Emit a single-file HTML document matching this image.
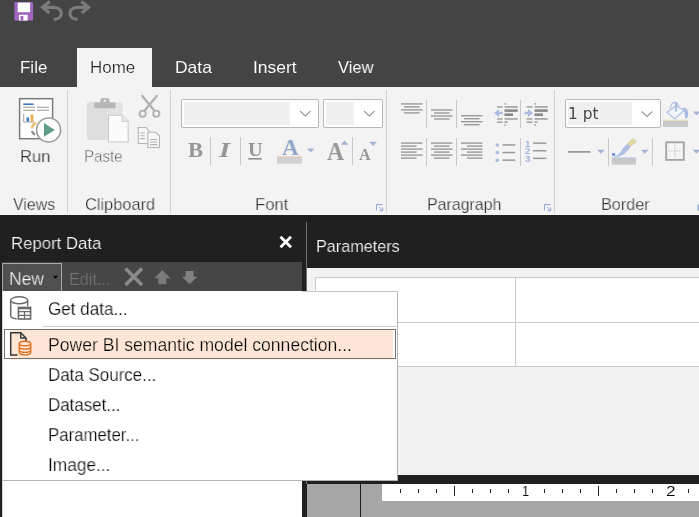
<!DOCTYPE html>
<html lang="en"><head><meta charset="utf-8"><title>Report Builder</title>
<style>
html,body{margin:0;padding:0;background:#444444;}
body{width:699px;height:517px;overflow:hidden;position:relative;font-family:"Liberation Sans",sans-serif;}
#app{position:absolute;left:0;top:0;width:699px;height:517px;overflow:hidden;background:#444444;}
.b{position:absolute;}
.t{will-change:transform;position:absolute;white-space:nowrap;line-height:0;transform-origin:0 0;display:block;height:0;}
.t::before{content:"";display:inline-block;height:0;vertical-align:baseline;}
svg{position:absolute;left:0;top:0;overflow:visible;}
.sans{font-family:"Liberation Sans",sans-serif;}
.serif{font-family:"Liberation Serif",serif;}
.dj{font-family:"DejaVu Sans","Liberation Sans",sans-serif;}

</style></head>
<body>
<div id="app">
<!-- title / quick access bar + tab row -->
<div class="b" style="left:0;top:0;width:699px;height:87px;background:#444444"></div>
<div class="b" style="left:77px;top:48px;width:75px;height:40px;background:#f3f3f3"></div>
<!-- ribbon body -->
<div class="b" style="left:0;top:87px;width:699px;height:128px;background:#f3f3f3"></div>
<!-- group separators -->
<div class="b" style="left:67px;top:90px;width:1px;height:123px;background:#d2d2d2"></div>
<div class="b" style="left:170px;top:90px;width:1px;height:123px;background:#d2d2d2"></div>
<div class="b" style="left:386px;top:90px;width:1px;height:123px;background:#d2d2d2"></div>
<div class="b" style="left:554px;top:90px;width:1px;height:123px;background:#d2d2d2"></div>
<!-- lower dark area -->
<div class="b" style="left:0;top:215px;width:699px;height:302px;background:#202020"></div>
<!-- Report Data panel -->
<div class="b" style="left:2px;top:262px;width:300px;height:29px;background:#464646"></div>
<div class="b" style="left:2px;top:291px;width:300px;height:226px;background:#ffffff;border-left:1px solid #d8d8d8;box-sizing:border-box"></div>
<div class="b" style="left:2px;top:263px;width:60px;height:28px;background:#505050;border:1px solid #a8a8a8;border-bottom:none;box-sizing:border-box"></div>
<!-- panel splitter line -->
<div class="b" style="left:306px;top:222px;width:1px;height:262px;background:#6e6e6e"></div>
<!-- Parameters panel -->
<div class="b" style="left:307px;top:268px;width:392px;height:207px;background:#f2f2f2"></div>
<div class="b" style="left:315px;top:277px;width:390px;height:90px;background:#ffffff;border:1px solid #cacaca;box-sizing:border-box"></div>
<div class="b" style="left:515px;top:277px;width:1px;height:90px;background:#cacaca"></div>
<div class="b" style="left:315px;top:322px;width:390px;height:1px;background:#cacaca"></div>
<!-- design surface -->
<div class="b" style="left:307px;top:484px;width:392px;height:33px;background:#a6a6a6"></div>
<div class="b" style="left:360px;top:484px;width:1px;height:33px;background:#1e1e1e"></div>
<div class="b" style="left:382px;top:484px;width:317px;height:17px;background:#ffffff"></div>
<!-- dropdown menu -->
<div class="b" style="left:2px;top:291px;width:396px;height:190px;background:#ffffff;border:1px solid #b4b4b4;border-top:none;border-left:1px solid #d8d8d8;box-sizing:border-box"></div>
<div class="b" style="left:302px;top:291px;width:96px;height:1px;background:#c4c4c4"></div>
<div class="b" style="left:43px;top:326px;width:353px;height:1px;background:#cdcdcd"></div>
<div class="b" style="left:4px;top:329px;width:392px;height:30px;background:linear-gradient(to right,#ffffff 0,#ffffff 6px,#fde6d5 6px,#fde6d5 388px,#ffffff 388px);border:1px solid #747474;box-sizing:border-box"></div>
<div class="b" style="left:11px;top:359px;width:382px;height:1px;background:#fef1e7"></div>
<svg width="699" height="517" viewBox="0 0 699 517">
<g>
<!-- quick access: save -->
<g>
<path d="M14.400 2h17.600l1.100 1.100v17.500H14.400z" fill="#a066c0"/>
<rect x="17.700" y="2.600" width="12.400" height="9.600" fill="#ffffff"/>
<rect x="18.900" y="14.800" width="8.700" height="5.800" fill="#ffffff"/>
<rect x="20.500" y="16" width="2.900" height="4.600" fill="#a066c0"/>
</g>
<!-- undo / redo -->
<g fill="none" stroke="#7b7b7b" stroke-width="3.200" stroke-linejoin="miter">
<path d="M49.800 1.600 42.600 7.300 49.400 12.900"/>
<path d="M43.500 7.400H53c5.200 0 8.300 2.600 8.300 5.800 0 3.600-3 6.100-7.600 6.100"/>
<path d="M81.400 1.600 88.600 7.300 81.800 12.900"/>
<path d="M87.700 7.400H78.200c-5.200 0-8.300 2.600-8.300 5.800 0 3.600 3 6.100 7.600 6.100"/>
</g>
<!-- Run icon -->
<g>
<rect x="19.6" y="98.7" width="33" height="40" fill="#ffffff" stroke="#7a7a7a" stroke-width="1.5"/>
<rect x="23.2" y="103.4" width="10.3" height="1.6" fill="#3b7dc4"/>
<rect x="23.2" y="106.7" width="11.8" height="1.1" fill="#a0a0a0"/>
<rect x="23.2" y="109.7" width="11.8" height="1.1" fill="#a0a0a0"/>
<rect x="37" y="106.7" width="12" height="1.1" fill="#a0a0a0"/>
<rect x="37" y="109.7" width="12" height="1.1" fill="#a0a0a0"/>
<path d="M23.7 114v8h10.6" fill="none" stroke="#a0a0a0" stroke-width="1"/>
<rect x="26.5" y="117.5" width="2.6" height="4" fill="#3b7dc4"/>
<rect x="30.6" y="114.5" width="2.8" height="7" fill="#e8b04e"/>
<path d="M36.500 123a6 6 0 0 0-4.600 5.500" fill="none" stroke="#ebc070" stroke-width="2.400"/>
<path d="M32 131a6 6 0 0 0 3 3.600" fill="none" stroke="#8c8c8c" stroke-width="2.400"/>
<circle cx="48.600" cy="130" r="12" fill="#ffffff" stroke="#9c9c9c" stroke-width="1.600"/>
<path d="M44 123v13.8l10.8-6.9z" fill="#5f9f88"/>
</g>
<!-- Paste icon -->
<g>
<rect x="86.9" y="102.3" width="35.8" height="37.4" rx="2" fill="#e3e3e3"/>
<rect x="86.9" y="102.3" width="20" height="37.4" rx="2" fill="#dedede"/>
<path d="M94.300 108.300v-5.800h5.900v-1.500a3 3 0 0 1 3-3h3.400a3 3 0 0 1 3 3v1.500h5.900v5.800z" fill="#b6b6b6"/>
<circle cx="104.900" cy="100.700" r="1.250" fill="#eeeeee"/>
<path d="M108.5 115.3h13.7l6 6v20.7h-19.7z" fill="#fbfbfb" stroke="#c9c9c9" stroke-width="1.1"/>
<path d="M122.2 115.3v6h6" fill="#ececec" stroke="#c9c9c9" stroke-width="1.1"/>
</g>
<!-- scissors -->
<g fill="none" stroke="#b2b2b2" stroke-width="2.400" stroke-linecap="round">
<path d="M142.300 96 154.500 110.800"/><path d="M156.700 96 144.500 110.800"/>
<circle cx="142.700" cy="113.700" r="3.100" stroke-width="1.900"/><circle cx="156.300" cy="113.700" r="3.100" stroke-width="1.900"/>
</g>
<!-- copy -->
<g stroke="#b4b4b4" stroke-width="1.1" fill="#f7f7f7">
<path d="M138.3 127.5h7.7l3.2 3.2v12.8h-10.9z"/>
<path d="M147.8 132.3h8l3.7 3.7v11.5h-11.7z"/>
<path d="M140.3 133h4.5M140.3 135.8h4.5M140.3 138.6h4.5M150 139.5h7.3M150 142h7.3M150 144.6h7.3" fill="none"/>
</g>
<!-- font combos -->
<g>
<rect x="181.5" y="99.5" width="137" height="28" rx="1.500" fill="#ffffff" stroke="#b8b8b8"/>
<rect x="184" y="102" width="106" height="23" fill="#f0f0f0"/>
<path d="M300 111l5.3 5 5.3-5" fill="none" stroke="#969696" stroke-width="1.100"/>
<rect x="323.5" y="99.5" width="59" height="28" rx="1.500" fill="#ffffff" stroke="#b8b8b8"/>
<rect x="326" y="102" width="28" height="23" fill="#f0f0f0"/>
<path d="M364 111l5.3 5 5.3-5" fill="none" stroke="#969696" stroke-width="1.100"/>
</g>
<!-- font row 2 -->
<g>
<rect x="210" y="137" width="1" height="28" fill="#c8c8c8"/>
<rect x="240" y="137" width="1" height="28" fill="#c8c8c8"/>
<rect x="352" y="137" width="1" height="28" fill="#c8c8c8"/>
<rect x="248.3" y="158" width="13.4" height="1.6" fill="#8f8f8f"/>
<rect x="277" y="156.7" width="25" height="7" fill="#d0d0d0"/>
<rect x="277" y="156.4" width="25" height="0.9" fill="#f2c9b0"/>
<path d="M307 148.5h7.6l-3.8 4z" fill="#a3b4d6"/>
<path d="M340.8 144.8h7.6l-3.8-4.3z" fill="#a3b4d6"/>
<path d="M369.2 141.8h7.8l-3.9 4.3z" fill="#a3b4d6"/>
</g>
<!-- paragraph icons -->
<g fill="#9a9a9a">
<rect x="426" y="100" width="1" height="28" fill="#c8c8c8"/>
<rect x="456" y="100" width="1" height="28" fill="#c8c8c8"/>
<rect x="520" y="100" width="1" height="28" fill="#c8c8c8"/>
<rect x="426" y="138" width="1" height="28" fill="#c8c8c8"/>
<rect x="456" y="138" width="1" height="28" fill="#c8c8c8"/>
<rect x="520" y="138" width="1" height="28" fill="#c8c8c8"/>
<!-- top align -->
<rect x="401" y="103.2" width="21.5" height="1.4"/><rect x="404" y="106.2" width="15.5" height="1.4"/><rect x="401" y="109.2" width="21.5" height="1.4"/><rect x="404" y="112.2" width="15.5" height="1.4"/>
<!-- middle -->
<rect x="431" y="109.3" width="21.5" height="1.4"/><rect x="434" y="112.3" width="15.5" height="1.4"/><rect x="431" y="115.3" width="21.5" height="1.4"/><rect x="434" y="118.3" width="15.5" height="1.4"/>
<!-- bottom -->
<rect x="461" y="115" width="21.5" height="1.4"/><rect x="464" y="118" width="15.5" height="1.4"/><rect x="461" y="121" width="21.5" height="1.4"/><rect x="464" y="124" width="15.5" height="1.4"/>
<!-- left align -->
<rect x="401" y="142.4" width="21.5" height="1.4"/><rect x="401" y="145.4" width="15.5" height="1.4"/><rect x="401" y="148.4" width="21.5" height="1.4"/><rect x="401" y="151.4" width="15.5" height="1.4"/><rect x="401" y="154.4" width="21.5" height="1.4"/><rect x="401" y="157.4" width="15.5" height="1.4"/>
<!-- center -->
<rect x="431" y="142.4" width="21.5" height="1.4"/><rect x="434" y="145.4" width="15.5" height="1.4"/><rect x="431" y="148.4" width="21.5" height="1.4"/><rect x="434" y="151.4" width="15.5" height="1.4"/><rect x="431" y="154.4" width="21.5" height="1.4"/><rect x="434" y="157.4" width="15.5" height="1.4"/>
<!-- right -->
<rect x="461" y="142.4" width="21.5" height="1.4"/><rect x="467" y="145.4" width="15.5" height="1.4"/><rect x="461" y="148.4" width="21.5" height="1.4"/><rect x="467" y="151.4" width="15.5" height="1.4"/><rect x="461" y="154.4" width="21.5" height="1.4"/><rect x="467" y="157.4" width="15.5" height="1.4"/>
</g>
<!-- decrease indent -->
<g>
<rect x="504.400" y="103" width="1.600" height="1.600" fill="#a8a8a8"/><rect x="504.400" y="124.200" width="1.600" height="1.600" fill="#a8a8a8"/>
<rect x="497" y="106.2" width="5.5" height="1.500" fill="#a2a2a2"/><rect x="497" y="118.2" width="5.5" height="1.500" fill="#a2a2a2"/><rect x="497" y="121.4" width="5.5" height="1.500" fill="#a2a2a2"/>
<rect x="504.5" y="106.2" width="13.2" height="1.5" fill="#9a9a9a"/>
<rect x="504.5" y="109.3" width="13.2" height="2.6" fill="#8a8a8a"/>
<rect x="504.5" y="113.4" width="8.5" height="2.6" fill="#8a8a8a"/>
<rect x="504.5" y="118.2" width="13.2" height="1.5" fill="#9a9a9a"/>
<rect x="504.5" y="121.4" width="3" height="1.5" fill="#9a9a9a"/>
<path d="M494 113l5-4v2.7h3.5v2.6H499v2.7z" fill="#a9bce0"/>
</g>
<!-- increase indent -->
<g>
<rect x="534.400" y="103" width="1.600" height="1.600" fill="#a8a8a8"/><rect x="534.400" y="124.200" width="1.600" height="1.600" fill="#a8a8a8"/>
<rect x="526.5" y="106.2" width="6" height="1.500" fill="#a2a2a2"/><rect x="526.5" y="118.2" width="6" height="1.500" fill="#a2a2a2"/><rect x="526.5" y="121.4" width="6" height="1.500" fill="#a2a2a2"/>
<rect x="534.5" y="106.2" width="13.2" height="1.5" fill="#9a9a9a"/>
<rect x="534.5" y="109.3" width="13.2" height="2.6" fill="#8a8a8a"/>
<rect x="534.5" y="113.4" width="8.5" height="2.6" fill="#8a8a8a"/>
<rect x="534.5" y="118.2" width="13.2" height="1.5" fill="#9a9a9a"/>
<rect x="534.5" y="121.4" width="3" height="1.5" fill="#9a9a9a"/>
<path d="M533 113l-5-4v2.7h-3.5v2.6h3.5v2.7z" fill="#a9bce0"/>
</g>
<!-- bullets -->
<g>
<circle cx="497.3" cy="145" r="1.8" fill="#a9bce0"/><circle cx="497.3" cy="152.6" r="1.8" fill="#a9bce0"/><circle cx="497.3" cy="160.2" r="1.8" fill="#a9bce0"/>
<rect x="502.5" y="144.2" width="12.8" height="1.5" fill="#9a9a9a"/><rect x="502.5" y="151.8" width="12.8" height="1.5" fill="#9a9a9a"/><rect x="502.5" y="159.4" width="12.8" height="1.5" fill="#9a9a9a"/>
</g>
<!-- numbering -->
<g>
<rect x="533" y="142.4" width="13.4" height="1.5" fill="#9a9a9a"/><rect x="533" y="150" width="13.4" height="1.5" fill="#9a9a9a"/><rect x="533" y="157.6" width="13.4" height="1.5" fill="#9a9a9a"/>
</g>
<!-- border group -->
<g>
<rect x="565.5" y="99.5" width="95" height="28" rx="1.500" fill="#ffffff" stroke="#b8b8b8"/>
<rect x="568" y="102" width="64" height="23" fill="#f0f0f0"/>
<path d="M641.7 111.5l5.3 5 5.3-5" fill="none" stroke="#969696" stroke-width="1.100"/>
<!-- bucket -->
<rect x="663" y="120.5" width="25" height="6.5" fill="#c9c9c9"/>
<rect x="663" y="119.8" width="25" height="0.9" fill="#e9e2a8"/>
<path d="M682.500 108c3.500-.8 5.800 1.500 5.600 6.500-.1 2.400-.8 4-1.900 4-1.200 0-1.300-1.800-1.400-3.800-.1-2.400-.8-3.900-2.800-4.200z" fill="#a9bce0"/>
<path d="M667 112.300l8.800-6.600 8.300 4.500-9.400 8.800z" fill="#f1f4fb" stroke="#b3c2e2" stroke-width="1.200" stroke-linejoin="round"/>
<path d="M670.500 108.500c0-3.500 1.800-6 4.200-6 2.200 0 3.600 2 3.800 4.800" fill="none" stroke="#b3c2e2" stroke-width="1.300"/>
<path d="M676 103.700v7.300" stroke="#9fb0d4" stroke-width="1.500" fill="none" stroke-linecap="round"/>
<path d="M692.800 111.500h7.600l-3.800 4z" fill="#a3b4d6"/>
<!-- line style -->
<rect x="568" y="151" width="22.500" height="1.800" fill="#9a9a9a"/>
<path d="M597 149.800h7.600l-3.800 4z" fill="#a3b4d6"/>
<rect x="608" y="138" width="1" height="28" fill="#c8c8c8"/>
<rect x="652" y="138" width="1" height="28" fill="#c8c8c8"/>
<!-- pen -->
<rect x="611.700" y="158" width="24.300" height="6.600" fill="#c9c9c9"/>
<rect x="611.700" y="157.300" width="24.300" height="0.900" fill="#b9c8ea"/>
<path d="M612 153.200h3.200v2.600h-3.200z" fill="#6f8fe0"/>
<path d="M614 156.800c4 .4 8-1 11-3.600 2.600-2.300 4.400-4.600 5.600-6.800l-3.400-2.400c-1.800 1.600-4 3.600-5.400 6-1.400 2.500-3.600 5.200-7.800 6.800z" fill="#aebfe2"/>
<path d="M627.200 144l3.400 2.400 4.600-3.600c1-1 .8-2.400-.2-3.200-1-.8-2.400-.8-3.400.2z" fill="#e3d6a6" stroke="#cfc6a8" stroke-width="0.600"/>
<path d="M641 149.800h7.600l-3.800 4z" fill="#a3b4d6"/>
<!-- borders box -->
<rect x="666.200" y="142.300" width="17.600" height="17.600" fill="#f5f5f5" stroke="#a6a6a6" stroke-width="1.900"/>
<path d="M675 144.700v13.500M668.300 151.100h13.500" stroke="#cdcdcd" stroke-width="1.500" stroke-dasharray="1.400 1.300" fill="none"/>
<rect x="697.300" y="204.500" width="2" height="6" fill="#9db3de"/>
<path d="M692.600 149.800h7.600l-3.800 4z" fill="#a3b4d6"/>
</g>
<!-- dialog launchers -->
<g fill="none" stroke="#8fa8d8" stroke-width="1">
<path d="M376.500 210.500v-6h6"/><path d="M379 207l3.500 3.500M382.800 207.500v3.300h-3.300"/>
<path d="M544.500 210.500v-6h6"/><path d="M547 207l3.500 3.500M550.800 207.500v3.300h-3.300"/>
</g>
<!-- Report Data close X -->
<path d="M280.500 236.700l10.500 10.500M291 236.700l-10.500 10.500" stroke="#ffffff" stroke-width="2.800" fill="none"/>
<!-- New dropdown arrow -->
<path d="M52.800 275.800h5.400l-2.700 3.100z" fill="#0c0c0c"/>
<!-- toolbar delete X -->
<path d="M125.500 268.500l16.500 16.500M142 268.500l-16.500 16.500" stroke="#8a8a8a" stroke-width="3.600" fill="none"/>
<!-- up/down arrows -->
<path d="M162.300 270l8.300 8.300h-4.300v6h-8v-6h-4.300z" fill="#7a7a7a"/>
<path d="M189.600 284.300l7.700-7.600h-3.700v-5.700h-8v5.700h-3.700z" fill="#808080"/>
<!-- Get data icon -->
<g fill="none" stroke="#6a6a6a" stroke-width="1.500">
<path d="M10.700 300.300v15.300c0 1.700 2.800 3 6 3.300"/>
<ellipse cx="19.200" cy="300.300" rx="8.500" ry="3.500" fill="#ffffff"/>
<path d="M27.700 300.300v5.500"/>
<rect x="18.400" y="307.400" width="12.200" height="11.600" fill="#ffffff" stroke-width="1.600"/>
<path d="M18.400 311.600h12.200M18.400 315.300h12.200M24.500 311.600v7.400" stroke-width="1.200"/>
<path d="M18.400 308.500h12.200" stroke-width="1.600"/>
</g>
<!-- Power BI icon -->
<g fill="none">
<path d="M17.500 355h-6.800v-22.300h10l5.300 5.300v3" stroke="#383838" stroke-width="1.500"/>
<path d="M20.700 332.700v5.300h5.300" stroke="#383838" stroke-width="1.300"/>
<path d="M19.300 343.500v9c0 1.400 2.600 2.400 5.700 2.400s5.700-1 5.700-2.400v-9" stroke="#e07020" stroke-width="1.400" fill="#fde6d5"/>
<ellipse cx="25" cy="343.500" rx="5.700" ry="2.300" stroke="#e07020" stroke-width="1.400" fill="#fde6d5"/>
<path d="M19.300 346.700c0 1.400 2.600 2.400 5.700 2.400s5.700-1 5.700-2.400M19.300 350c0 1.400 2.600 2.400 5.700 2.400s5.700-1 5.700-2.400" stroke="#e07020" stroke-width="1.400"/>
</g>
<!-- ruler ticks -->
<g fill="#222222">
<rect x="400" y="489" width="1" height="4"/><rect x="418" y="489" width="1" height="4"/><rect x="436" y="489" width="1" height="4"/>
<rect x="454" y="486" width="1" height="10"/>
<rect x="472" y="489" width="1" height="4"/><rect x="490" y="489" width="1" height="4"/><rect x="508" y="489" width="1" height="4"/>
<rect x="544" y="489" width="1" height="4"/><rect x="562" y="489" width="1" height="4"/><rect x="580" y="489" width="1" height="4"/>
<rect x="598" y="486" width="1" height="10"/>
<rect x="616" y="489" width="1" height="4"/><rect x="634" y="489" width="1" height="4"/><rect x="652" y="489" width="1" height="4"/>
<rect x="688" y="489" width="1" height="4"/>
</g>
</g>
</svg>

<span id="t_file" class="t sans" style="left:20.0px;top:67.96px;font-size:16.6px;color:#ffffff;font-weight:400;transform:scaleX(1.0220);-webkit-text-stroke:0.05px #444444">File</span>
<span id="t_home" class="t sans" style="left:90.0px;top:67.96px;font-size:16.6px;color:#222222;font-weight:400;transform:scaleX(1.0232);-webkit-text-stroke:0.2px #f3f3f3">Home</span>
<span id="t_data" class="t sans" style="left:175.0px;top:67.96px;font-size:16.6px;color:#ffffff;font-weight:400;transform:scaleX(1.0515);-webkit-text-stroke:0.05px #444444">Data</span>
<span id="t_insert" class="t sans" style="left:253.0px;top:67.96px;font-size:16.6px;color:#ffffff;font-weight:400;transform:scaleX(1.0520);-webkit-text-stroke:0.05px #444444">Insert</span>
<span id="t_view" class="t sans" style="left:338.0px;top:67.96px;font-size:16.6px;color:#ffffff;font-weight:400;transform:scaleX(0.9915);-webkit-text-stroke:0.05px #444444">View</span>
<span id="t_run" class="t sans" style="left:20.0px;top:157.42px;font-size:17px;color:#2a2a2a;font-weight:400;transform:scaleX(0.9742);-webkit-text-stroke:0.25px #f3f3f3">Run</span>
<span id="t_paste" class="t sans" style="left:84.0px;top:157.42px;font-size:17px;color:#686868;font-weight:400;transform:scaleX(0.8873);-webkit-text-stroke:0.4px #f3f3f3">Paste</span>
<span id="t_views" class="t sans" style="left:13.0px;top:205.32px;font-size:17px;color:#333333;font-weight:400;transform:scaleX(0.9365);-webkit-text-stroke:0.25px #f3f3f3">Views</span>
<span id="t_clip" class="t sans" style="left:85.0px;top:205.32px;font-size:17px;color:#333333;font-weight:400;transform:scaleX(0.9636);-webkit-text-stroke:0.25px #f3f3f3">Clipboard</span>
<span id="t_font" class="t sans" style="left:255.0px;top:205.32px;font-size:17px;color:#333333;font-weight:400;transform:scaleX(0.9799);-webkit-text-stroke:0.25px #f3f3f3">Font</span>
<span id="t_para" class="t sans" style="left:427.0px;top:205.32px;font-size:17px;color:#333333;font-weight:400;transform:scaleX(0.9368);-webkit-text-stroke:0.25px #f3f3f3">Paragraph</span>
<span id="t_border" class="t sans" style="left:601.0px;top:205.32px;font-size:17px;color:#333333;font-weight:400;transform:scaleX(0.9527);-webkit-text-stroke:0.25px #f3f3f3">Border</span>
<span id="t_1pt" class="t dj" style="left:568.0px;top:114.11px;font-size:15px;color:#484848;font-weight:400;transform:scaleX(1.0263)">1 pt</span>
<span id="t_rd" class="t sans" style="left:11.0px;top:243.62px;font-size:17px;color:#ffffff;font-weight:400;transform:scaleX(0.9852);-webkit-text-stroke:0.22px #202020">Report Data</span>
<span id="t_params" class="t sans" style="left:316.0px;top:247.22px;font-size:17px;color:#ffffff;font-weight:400;transform:scaleX(0.9532);-webkit-text-stroke:0.22px #202020">Parameters</span>
<span id="t_new" class="t sans" style="left:9.0px;top:278.87px;font-size:18px;color:#ffffff;font-weight:400;transform:scaleX(0.9718);-webkit-text-stroke:0.3px #505050">New</span>
<span id="t_edit" class="t sans" style="left:69.0px;top:279.62px;font-size:17px;color:#727272;font-weight:400;transform:scaleX(0.9544);-webkit-text-stroke:0.2px #464646">Edit...</span>
<span id="t_m1" class="t sans" style="left:48.0px;top:309.44px;font-size:17.5px;color:#000000;font-weight:400;transform:scaleX(0.9747);-webkit-text-stroke:0.25px #ffffff">Get data...</span>
<span id="t_m2" class="t sans" style="left:48.0px;top:344.94px;font-size:17.5px;color:#000000;font-weight:400;transform:scaleX(1.0048);-webkit-text-stroke:0.25px #fde6d5">Power BI semantic model connection...</span>
<span id="t_m3" class="t sans" style="left:48.0px;top:375.44px;font-size:17.5px;color:#000000;font-weight:400;transform:scaleX(0.9681);-webkit-text-stroke:0.25px #ffffff">Data Source...</span>
<span id="t_m4" class="t sans" style="left:48.0px;top:405.44px;font-size:17.5px;color:#000000;font-weight:400;transform:scaleX(0.9659);-webkit-text-stroke:0.25px #ffffff">Dataset...</span>
<span id="t_m5" class="t sans" style="left:48.0px;top:435.44px;font-size:17.5px;color:#000000;font-weight:400;transform:scaleX(0.9592);-webkit-text-stroke:0.25px #ffffff">Parameter...</span>
<span id="t_m6" class="t sans" style="left:48.0px;top:465.44px;font-size:17.5px;color:#000000;font-weight:400;transform:scaleX(0.9867);-webkit-text-stroke:0.25px #ffffff">Image...</span>
<span id="t_r1" class="t sans" style="left:522.0px;top:490.51px;font-size:15px;color:#000000;font-weight:400;transform:scaleX(0.8490);-webkit-text-stroke:0.12px #ffffff">1</span>
<span id="t_r2" class="t sans" style="left:666.0px;top:490.51px;font-size:15px;color:#000000;font-weight:400;transform:scaleX(1.1477);-webkit-text-stroke:0.12px #ffffff">2</span>
<span id="t_B" class="t serif" style="left:188.0px;top:150.28px;font-size:21.4px;color:#969696;font-weight:700;transform:scaleX(1.0555)">B</span>
<span id="t_I" class="t serif" style="left:219.0px;top:150.28px;font-size:21.4px;color:#969696;font-weight:700;transform:scaleX(1.3452)"><i>I</i></span>
<span id="t_U" class="t serif" style="left:248.0px;top:149.69px;font-size:19px;color:#969696;font-weight:700;transform:scaleX(1.0628)">U</span>
<span id="t_A1" class="t serif" style="left:282.0px;top:146.60px;font-size:24px;color:#8fa3c8;font-weight:700;transform:scaleX(0.9604)">A</span>
<span id="t_A2" class="t serif" style="left:327.0px;top:152.40px;font-size:25.2px;color:#969696;font-weight:700;transform:scaleX(0.9332)">A</span>
<span id="t_A3" class="t serif" style="left:359.0px;top:154.70px;font-size:16px;color:#969696;font-weight:700;transform:scaleX(1.0060)">A</span>
<span id="t_n1" class="t sans" style="left:525.0px;top:143.59px;font-size:9px;color:#9fb3dc;font-weight:700;transform:scaleX(1.0748)">1</span>
<span id="t_n2" class="t sans" style="left:525.0px;top:151.19px;font-size:9px;color:#9fb3dc;font-weight:700;transform:scaleX(1.0470)">2</span>
<span id="t_n3" class="t sans" style="left:525.0px;top:158.79px;font-size:9px;color:#9fb3dc;font-weight:700;transform:scaleX(1.1029)">3</span>
</div>
</body></html>
